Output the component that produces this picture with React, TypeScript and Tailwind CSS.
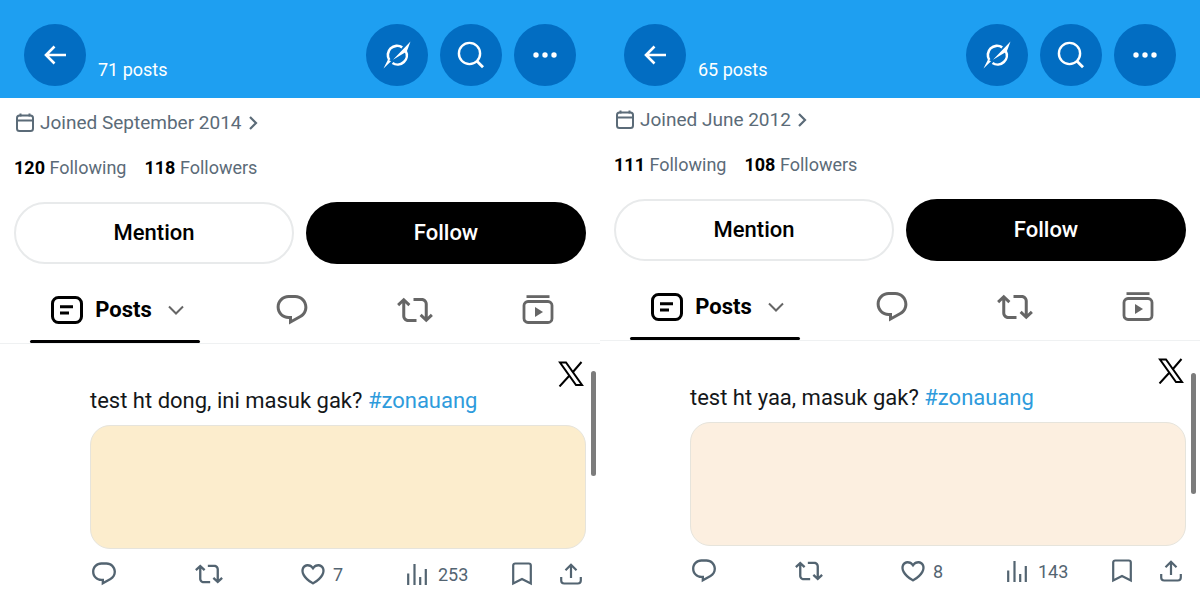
import type { ReactNode } from "react";

interface Profile {
  posts: number;
  joined: string;
  following: number;
  followers: number;
  text: string;
  hashtag: string;
  likes: number;
  views: number;
  offset: string;
  media: string;
  scrollbar: string;
}

const PROFILES: Profile[] = [
  {
    posts: 71,
    joined: "September 2014",
    following: 120,
    followers: 118,
    text: "test ht dong, ini masuk gak?",
    hashtag: "#zonauang",
    likes: 7,
    views: 253,
    offset: "pt-[11px]",
    media: "bg-[#fcedcd]",
    scrollbar: "top-[371px] h-[105px]",
  },
  {
    posts: 65,
    joined: "June 2012",
    following: 111,
    followers: 108,
    text: "test ht yaa, masuk gak?",
    hashtag: "#zonauang",
    likes: 8,
    views: 143,
    offset: "pt-2",
    media: "bg-[#fcefe0]",
    scrollbar: "top-[373px] h-[121px]",
  },
];

const REPLY =
  "M1.751 10c0-4.42 3.584-8 8.005-8h4.366c4.49 0 8.129 3.64 8.129 8.13 0 2.96-1.607 5.68-4.196 7.11l-8.054 4.46v-3.69h-.067c-4.49.1-8.183-3.51-8.183-8.01zm8.005-6c-3.317 0-6.005 2.69-6.005 6 0 3.37 2.77 6.08 6.138 6.01l.351-.01h1.761v2.3l5.087-2.81c1.951-1.08 3.163-3.13 3.163-5.36 0-3.39-2.744-6.13-6.129-6.13H9.756z";
const REPOST =
  "M4.5 3.88l4.432 4.14-1.364 1.46L5.5 7.55V16c0 1.1.896 2 2 2H13v2H7.5c-2.209 0-4-1.79-4-4V7.55L1.432 9.48.068 8.02 4.5 3.88zM16.5 6H11V4h5.5c2.209 0 4 1.79 4 4v8.45l2.068-1.93 1.364 1.46-4.432 4.14-4.432-4.14 1.364-1.46 2.068 1.93V8c0-1.1-.896-2-2-2z";
const LIKE =
  "M16.697 5.5c-1.222-.06-2.679.51-3.89 2.16l-.805 1.09-.806-1.09C9.984 6.01 8.526 5.44 7.304 5.5c-1.243.07-2.349.78-2.91 1.91-.552 1.12-.633 2.78.479 4.82 1.074 1.97 3.257 4.27 7.129 6.61 3.87-2.34 6.052-4.64 7.126-6.61 1.111-2.04 1.03-3.7.477-4.82-.561-1.13-1.666-1.84-2.908-1.91zm4.187 7.69c-1.351 2.48-4.001 5.12-8.379 7.67l-.503.3-.504-.3c-4.379-2.55-7.029-5.19-8.382-7.67-1.36-2.5-1.41-4.86-.514-6.67.887-1.79 2.647-2.91 4.601-3.01 1.651-.09 3.368.56 4.798 2.01 1.429-1.45 3.146-2.1 4.796-2.01 1.954.1 3.714 1.22 4.601 3.01.896 1.81.846 4.17-.514 6.67z";

function Glyph({ d, className }: { d: string; className: string }) {
  return (
    <svg viewBox="0 0 24 24" className={className} fill="currentColor" aria-hidden>
      <path d={d} />
    </svg>
  );
}

function Line({ viewBox, width, className, children }: {
  viewBox: string;
  width: number;
  className: string;
  children: ReactNode;
}) {
  return (
    <svg
      viewBox={viewBox}
      className={className}
      fill="none"
      stroke="currentColor"
      strokeWidth={width}
      aria-hidden
    >
      {children}
    </svg>
  );
}

function RoundButton({ label, children }: {
  label: string;
  children: ReactNode;
}) {
  return (
    <button
      type="button"
      aria-label={label}
      className="flex size-[62px] shrink-0 items-center justify-center rounded-full bg-[#026dc2] text-white"
    >
      {children}
    </button>
  );
}

function Header({ posts }: { posts: number }) {
  return (
    <header className="flex h-[98px] items-start bg-[#1e9ff1] px-6 pt-6">
      <RoundButton label="Back">
        <Line viewBox="0 0 24 24" width={2.6} className="size-6">
          <path d="M11.5 3.5 3 12l8.5 8.5M3 12h20" />
        </Line>
      </RoundButton>
      <span className="mt-8 ml-3 text-[18px] leading-7 text-white">
        {posts} posts
      </span>
      <div className="ml-auto flex gap-3">
        <RoundButton label="Grok">
          <svg viewBox="0 0 28 28" className="size-7" aria-hidden>
            <path
              d="M19.2 6.4A9.2 9.2 0 0 0 6.3 19M9.5 22A9.2 9.2 0 0 0 22.6 9.800"
              fill="none"
              stroke="currentColor"
              strokeWidth="2.6"
            />
            <path d="M27.5 .5 10 18.8 23.800 10.5ZM.5 27.5 5 18.5 8 20.2Z" fill="currentColor" />
          </svg>
        </RoundButton>
        <RoundButton label="Search">
          <Line viewBox="0 0 28 28" width={2.4} className="size-7">
            <circle cx="12.5" cy="12.5" r="10.6" />
            <path d="m19.8 20 6.2 6.2" strokeWidth="2.8" />
          </Line>
        </RoundButton>
        <RoundButton label="More">
          <svg viewBox="0 0 24 24" className="size-6" fill="currentColor" aria-hidden>
            <circle cx="3" cy="12" r="2.7" />
            <circle cx="12" cy="12" r="2.7" />
            <circle cx="21" cy="12" r="2.7" />
          </svg>
        </RoundButton>
      </div>
    </header>
  );
}

function ProfileInfo({ profile }: { profile: Profile }) {
  return (
    <div className="px-[14px]">
      <a href="#joined" className="flex h-7 items-center text-[19px] text-[#5b6b78]">
        <Line viewBox="0 0 20 20" width={2} className="mr-[5px] ml-px size-5">
          <rect x="2" y="2.5" width="16" height="15.5" rx="2.5" />
          <path d="M2 7.5h16M5.5 .5v3M14.5 .5v3" />
        </Line>
        Joined {profile.joined}
        <Line viewBox="0 0 10 16" width={2.2} className="ml-[6px] h-4 w-[10px]">
          <path d="m2 2 6 6-6 6" />
        </Line>
      </a>
      <div className="mt-4 flex h-7 items-center gap-[18px] text-[18px] text-[#5b6b78]">
        <a href="#following">
          <b className="text-black">{profile.following}</b> Following
        </a>
        <a href="#followers">
          <b className="text-black">{profile.followers}</b> Followers
        </a>
      </div>
      <div className="mt-[21px] grid grid-cols-2 gap-3 text-[22px] font-medium">
        <button
          type="button"
          className="h-[62px] rounded-full border-2 border-[#e8eaeb] pb-[2px] text-black"
        >
          Mention
        </button>
        <button type="button" className="h-[62px] rounded-full bg-black pb-[2px] text-white">
          Follow
        </button>
      </div>
    </div>
  );
}

function Tabs() {
  return (
    <nav className="grid h-20 grid-cols-[230fr_123fr_123fr_124fr] border-b border-[#eff1f2] text-[#666]">
      <button
        type="button"
        className="relative mx-[30px] flex items-center justify-center pt-3 pl-[5px] text-[22px] font-bold text-black"
      >
        <Line viewBox="0 0 32 28" width={3} className="h-7 w-8">
          <rect x="1.5" y="1.5" width="29" height="25" rx="6" />
          <path d="M9 10.8h13M9 17h9" />
        </Line>
        <span className="mr-4 ml-3">Posts</span>
        <Line viewBox="0 0 16 10" width={2} className="h-[10px] w-4 text-[#666]">
          <path d="m1 1.5 7 7 7-7" />
        </Line>
        <span className="absolute inset-x-0 bottom-0 h-[3px] rounded-full bg-black" />
      </button>
      <button type="button" aria-label="Replies" className="flex items-center justify-center pt-3">
        <Glyph d={REPLY} className="size-9" />
      </button>
      <button type="button" aria-label="Reposts" className="flex items-center justify-center pt-3">
        <Glyph d={REPOST} className="size-9" />
      </button>
      <button type="button" aria-label="Videos" className="flex items-center justify-center pt-3">
        <Line viewBox="0 0 32 30" width={2.8} className="h-[30px] w-8">
          <path d="M4.5 1.6h23" />
          <rect x="2" y="6.5" width="28" height="21" rx="4" />
          <path d="M13 12v10l8-5z" fill="currentColor" stroke="none" />
        </Line>
      </button>
    </nav>
  );
}

function Post({ profile }: { profile: Profile }) {
  return (
    <article className="pt-[17px] pr-[14px] pl-[90px]">
      <div className="flex justify-end">
        <Line viewBox="0 0 26 26" width={2} className="mr-[2px] size-[26px] text-black">
          <path d="M2 1.5h6L24 24h-6z" />
          <path d="M23.5 1 14.5 11.5M11.5 14.5 1.5 25.5" />
        </Line>
      </div>
      <p className="text-[22px] leading-7 whitespace-nowrap text-[#14171a]">
        {profile.text}{" "}
        <a href="#zonauang" className="text-[#2e9bdc]">{profile.hashtag}</a>
      </p>
      <div className={`mt-[10px] h-[124px] rounded-[20px] border border-[#e6e4dc] ${profile.media}`} />
      <div className="mt-[11px] grid h-6 grid-cols-[105fr_104fr_108fr_105fr_48fr_26fr] text-[18px] text-[#536471]">
        <button type="button" aria-label="Reply" className="flex items-center">
          <Glyph d={REPLY} className="size-7" />
        </button>
        <button type="button" aria-label="Repost" className="flex items-center">
          <Glyph d={REPOST} className="size-7" />
        </button>
        <button type="button" className="flex items-center gap-[6px]">
          <Glyph d={LIKE} className="size-7" />
          {profile.likes}
        </button>
        <button type="button" className="flex items-center gap-[11px]">
          <Line viewBox="0 0 20 22" width={2.2} className="h-[22px] w-5">
            <path d="M1.2 10.5V22M7.5 1v21M13.2 14v8M18.8 6v16" />
          </Line>
          {profile.views}
        </button>
        <button type="button" aria-label="Bookmark" className="flex items-center">
          <Line viewBox="0 0 20 24" width={2.2} className="h-6 w-5">
            <path d="M1.2 21.5V3.5a2 2 0 0 1 2-2h13.6a2 2 0 0 1 2 2V21.5L10 17z" />
          </Line>
        </button>
        <button type="button" aria-label="Share" className="flex items-center">
          <Line viewBox="0 0 22 22" width={2.2} className="size-[22px]">
            <path d="M11 15V2M5.5 7.2 11 1.8l5.5 5.4M1.2 14v3.5a3 3 0 0 0 3 3h13.6a3 3 0 0 0 3-3V14" />
          </Line>
        </button>
      </div>
    </article>
  );
}

function ProfileScreen({ profile }: { profile: Profile }) {
  return (
    <section className="relative min-w-0">
      <Header posts={profile.posts} />
      <div className={profile.offset}>
        <ProfileInfo profile={profile} />
        <Tabs />
        <Post profile={profile} />
      </div>
      <div className={`absolute right-1 w-[5px] rounded-full bg-[#7c7c7c] ${profile.scrollbar}`} />
    </section>
  );
}

export default function App() {
  return (
    <main className="grid min-h-screen grid-cols-2 bg-white font-['Roboto','Liberation_Sans',sans-serif]">
      {PROFILES.map((profile) => (
        <ProfileScreen key={profile.posts} profile={profile} />
      ))}
    </main>
  );
}
